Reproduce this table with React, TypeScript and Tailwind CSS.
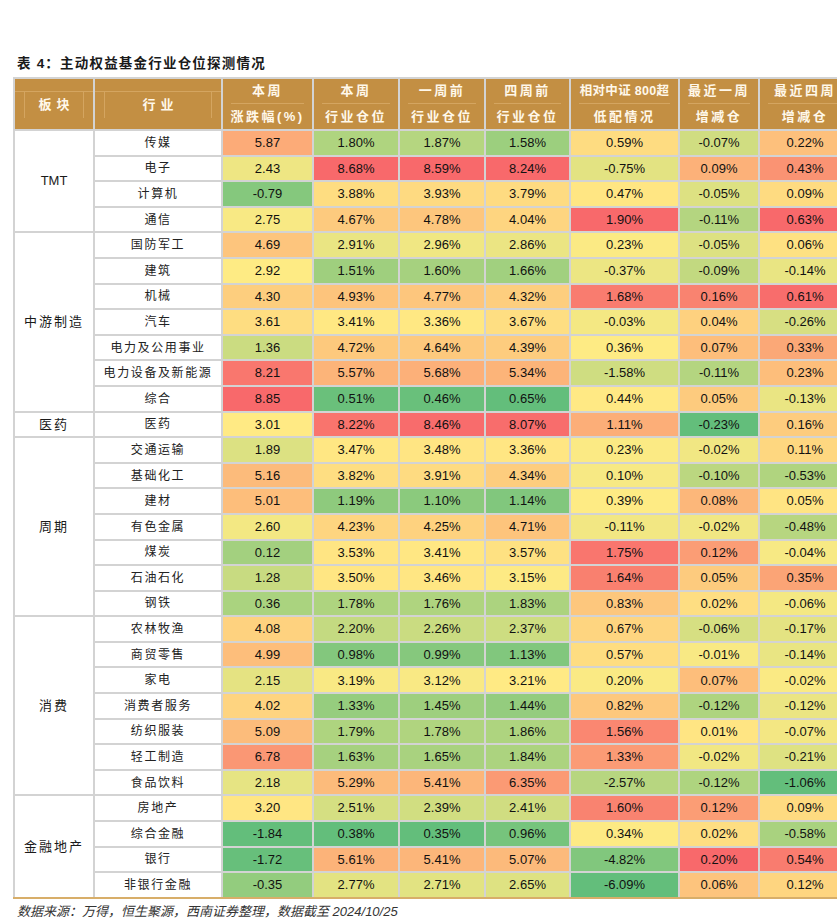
import React from "react"

type Row = [string, number, number, number, number, number, number, number]

const groups: { name: string; latin?: boolean; rows: Row[] }[] = [
  {
    name: "TMT",
    latin: true,
    rows: [
      ["传媒", 5.87, 1.8, 1.87, 1.58, 0.59, -0.07, 0.22],
      ["电子", 2.43, 8.68, 8.59, 8.24, -0.75, 0.09, 0.43],
      ["计算机", -0.79, 3.88, 3.93, 3.79, 0.47, -0.05, 0.09],
      ["通信", 2.75, 4.67, 4.78, 4.04, 1.9, -0.11, 0.63],
    ],
  },
  {
    name: "中游制造",
    rows: [
      ["国防军工", 4.69, 2.91, 2.96, 2.86, 0.23, -0.05, 0.06],
      ["建筑", 2.92, 1.51, 1.6, 1.66, -0.37, -0.09, -0.14],
      ["机械", 4.3, 4.93, 4.77, 4.32, 1.68, 0.16, 0.61],
      ["汽车", 3.61, 3.41, 3.36, 3.67, -0.03, 0.04, -0.26],
      ["电力及公用事业", 1.36, 4.72, 4.64, 4.39, 0.36, 0.07, 0.33],
      ["电力设备及新能源", 8.21, 5.57, 5.68, 5.34, -1.58, -0.11, 0.23],
      ["综合", 8.85, 0.51, 0.46, 0.65, 0.44, 0.05, -0.13],
    ],
  },
  {
    name: "医药",
    rows: [["医药", 3.01, 8.22, 8.46, 8.07, 1.11, -0.23, 0.16]],
  },
  {
    name: "周期",
    rows: [
      ["交通运输", 1.89, 3.47, 3.48, 3.36, 0.23, -0.02, 0.11],
      ["基础化工", 5.16, 3.82, 3.91, 4.34, 0.1, -0.1, -0.53],
      ["建材", 5.01, 1.19, 1.1, 1.14, 0.39, 0.08, 0.05],
      ["有色金属", 2.6, 4.23, 4.25, 4.71, -0.11, -0.02, -0.48],
      ["煤炭", 0.12, 3.53, 3.41, 3.57, 1.75, 0.12, -0.04],
      ["石油石化", 1.28, 3.5, 3.46, 3.15, 1.64, 0.05, 0.35],
      ["钢铁", 0.36, 1.78, 1.76, 1.83, 0.83, 0.02, -0.06],
    ],
  },
  {
    name: "消费",
    rows: [
      ["农林牧渔", 4.08, 2.2, 2.26, 2.37, 0.67, -0.06, -0.17],
      ["商贸零售", 4.99, 0.98, 0.99, 1.13, 0.57, -0.01, -0.14],
      ["家电", 2.15, 3.19, 3.12, 3.21, 0.2, 0.07, -0.02],
      ["消费者服务", 4.02, 1.33, 1.45, 1.44, 0.82, -0.12, -0.12],
      ["纺织服装", 5.09, 1.79, 1.78, 1.86, 1.56, 0.01, -0.07],
      ["轻工制造", 6.78, 1.63, 1.65, 1.84, 1.33, -0.02, -0.21],
      ["食品饮料", 2.18, 5.29, 5.41, 6.35, -2.57, -0.12, -1.06],
    ],
  },
  {
    name: "金融地产",
    rows: [
      ["房地产", 3.2, 2.51, 2.39, 2.41, 1.6, 0.12, 0.09],
      ["综合金融", -1.84, 0.38, 0.35, 0.96, 0.34, 0.02, -0.58],
      ["银行", -1.72, 5.61, 5.41, 5.07, -4.82, 0.2, 0.54],
      ["非银行金融", -0.35, 2.77, 2.71, 2.65, -6.09, 0.06, 0.12],
    ],
  },
]

const heads: [string, string][] = [
  ["本周", "涨跌幅(%)"],
  ["本周", "行业仓位"],
  ["一周前", "行业仓位"],
  ["四周前", "行业仓位"],
  ["相对中证 800超", "低配情况"],
  ["最近一周", "增减仓"],
  ["最近四周", "增减仓"],
]

// excel style 3-colour scale: low green, median yellow, high red
const GREEN = [99, 190, 123]
const YELLOW = [255, 235, 132]
const RED = [248, 105, 107]

const allRows = groups.flatMap((g) => g.rows)

const scales = [1, 2, 3, 4, 5, 6, 7].map((i) => {
  const vals = allRows.map((r) => r[i] as number).sort((a, b) => a - b)
  const n = vals.length
  const mid = n % 2 ? vals[(n - 1) / 2] : (vals[n / 2 - 1] + vals[n / 2]) / 2
  return { min: vals[0], max: vals[n - 1], mid }
})

function mix(a: number[], b: number[], t: number) {
  const c = a.map((x, k) => Math.round(x + (b[k] - x) * Math.max(0, Math.min(1, t))))
  return `rgb(${c[0]}, ${c[1]}, ${c[2]})`
}

function colour(col: number, v: number) {
  const s = scales[col]
  if (v >= s.mid) return mix(YELLOW, RED, (v - s.mid) / (s.max - s.mid))
  return mix(YELLOW, GREEN, (s.mid - v) / (s.mid - s.min))
}

const span: Record<number, string> = { 1: "row-span-1", 4: "row-span-4", 7: "row-span-7" }

export default function App() {
  return (
    <div className="w-[837px] h-[920px] overflow-hidden bg-white font-['Liberation_Sans','Noto_Sans_CJK_SC',sans-serif] text-[#1a1a1a]">
      <div className="pt-[56px] pl-[17px] h-[77px] text-[13.5px] leading-[16px] font-bold tracking-[1.2px]">
        表 4：主动权益基金行业仓位探测情况
      </div>

      <div className="ml-[13px] w-[850px] border-b-2 border-[#d8ae69]">
        <div className="grid grid-cols-[78px_126px_89px_84px_84px_83px_107px_78px_90px] grid-rows-[50px_repeat(30,23.6px)] gap-[2px] bg-[#d3d3d3] pt-[2px] pl-[2px]">
          {/* header */}
          <div className="bg-[#c38f43] flex flex-col">
            <div className="h-[13px] border-b border-[#d4a560]" />
            <div className="flex-1 mx-[9px] mb-[11px] border-x border-[#d4a560] flex items-center justify-center text-[13px] font-bold tracking-[5px] pl-[5px] text-[#fff8ea]">
              板块
            </div>
          </div>
          <div className="bg-[#c38f43] flex flex-col">
            <div className="h-[13px] border-b border-[#d4a560]" />
            <div className="flex-1 mx-[9px] mb-[11px] border-x border-[#d4a560] flex items-center justify-center text-[13px] font-bold tracking-[5px] pl-[5px] text-[#fff8ea]">
              行业
            </div>
          </div>
          {heads.map(([a, b], i) => (
            <div key={i} className="bg-[#c38f43] flex flex-col text-[13px] font-bold text-[#fff8ea] whitespace-nowrap">
              <div
                className={`h-[25px] mx-[8px] border-b border-[#d4a560] flex items-center justify-center ${
                  i === 4 ? "tracking-[0.3px] text-[12.5px]" : "tracking-[2.5px]"
                }`}
              >
                {a}
              </div>
              <div className="flex-1 flex items-center justify-center tracking-[2.5px]">{b}</div>
            </div>
          ))}

          {/* body */}
          {groups.map((g) => (
            <React.Fragment key={g.name}>
              <div
                className={`${span[g.rows.length]} col-start-1 bg-white flex items-center justify-center text-[13px] ${
                  g.latin ? "" : "tracking-[2px]"
                }`}
              >
                {g.name}
              </div>
              {g.rows.map((r) => (
                <React.Fragment key={r[0]}>
                  <div className="col-start-2 bg-white flex items-center justify-center text-[12px] tracking-[1.6px] text-[#222]">
                    {r[0]}
                  </div>
                  {[1, 2, 3, 4, 5, 6, 7].map((c) => {
                    const v = r[c] as number
                    return (
                      <div
                        key={c}
                        className="flex items-center justify-center text-[13px] text-[#111]"
                        style={{ backgroundColor: colour(c - 1, v) }}
                      >
                        {v.toFixed(2)}
                        {c > 1 ? "%" : ""}
                      </div>
                    )
                  })}
                </React.Fragment>
              ))}
            </React.Fragment>
          ))}
        </div>
      </div>

      <div className="pl-[17px] pt-[5px] text-[13px] leading-[16px] italic text-[#333]">
        数据来源：万得，恒生聚源，西南证券整理，数据截至 2024/10/25
      </div>
    </div>
  )
}
